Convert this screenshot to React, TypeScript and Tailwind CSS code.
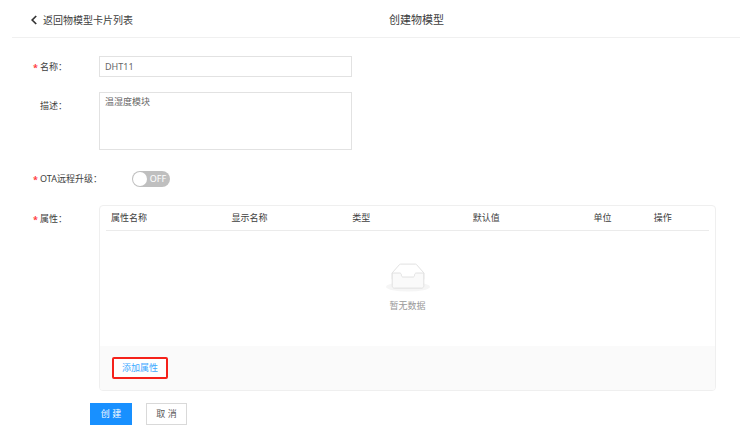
import React, { useState } from 'react';

interface FormRowProps {
  label: string;
  htmlFor?: string;
  required?: boolean;
  top?: boolean;
  className?: string;
  children: React.ReactNode;
}

const columns = [
  { title: '属性名称', width: 'w-1/5' },
  { title: '显示名称', width: 'w-1/5' },
  { title: '类型', width: 'w-1/5' },
  { title: '默认值', width: 'w-1/5' },
  { title: '单位', width: 'w-1/10' },
  { title: '操作', width: 'w-1/10' },
];

const FormRow: React.FC<FormRowProps> = ({ label, htmlFor, required, top, className = '', children }) => (
  <div className={`flex ${top ? 'items-start' : 'items-center'} ${className}`}>
    <label
      htmlFor={htmlFor}
      className={`flex w-[66px] shrink-0 items-center whitespace-nowrap leading-3 text-[#404040] ${top ? 'pt-2' : ''}`}
    >
      <span className="w-[7px] shrink-0 pt-0.5 font-bold leading-2 text-[#ff3b3f]">{required ? '*' : ''}</span>
      {label}：
    </label>
    {children}
  </div>
);

const EmptyIcon = () => (
  <svg width="44" height="29" viewBox="0 0 64 41" aria-hidden="true">
    <g transform="translate(0 1)" fill="none" fillRule="evenodd">
      <ellipse fill="#f5f5f5" cx="32" cy="33" rx="32" ry="7" />
      <g fillRule="nonzero" stroke="#e0e0e0" strokeWidth="1.4">
        <path d="M55 12.76L44.854 1.258C44.367.474 43.656 0 42.907 0H21.093c-.749 0-1.46.474-1.947 1.257L9 12.761V22h46v-9.24z" fill="#fff" />
        <path
          d="M41.613 15.931c0-1.605.994-2.93 2.227-2.931H55v18.137C55 33.26 53.68 35 52.05 35h-40.1C10.32 35 9 33.259 9 31.137V13h11.16c1.233 0 2.227 1.323 2.227 2.928v.022c0 1.605 1.005 2.901 2.237 2.901h14.752c1.232 0 2.237-1.308 2.237-2.913v-.007z"
          fill="#fafafa"
        />
      </g>
    </g>
  </svg>
);

const App: React.FC = () => {
  const [name, setName] = useState('DHT11');
  const [description, setDescription] = useState('温湿度模块');
  const [ota, setOta] = useState(false);

  return (
    <div className="bg-white pb-3 pl-3 font-['Noto_Sans','Noto_Sans_CJK_SC',sans-serif] text-[9px] text-[#404040]">
      <header className="flex h-[38px] items-center border-b border-[#f0f0f0] pl-[18px] pr-10 pt-0.5">
        <a href="#" className="flex items-center gap-1.5 text-[10px] leading-4 text-[#404040]">
          <svg width="7" height="10" viewBox="0 0 7 10" fill="none" stroke="#333" strokeWidth="1.7" aria-hidden="true">
            <path d="M6.2 1L2.2 5L6.2 9" />
          </svg>
          返回物模型卡片列表
        </a>
        <h1 className="flex-1 text-center text-[11px] leading-4 text-[#404040]">创建物模型</h1>
      </header>

      <form className="pl-[21px] pr-6 pt-[18px]" onSubmit={(e) => e.preventDefault()}>
        <FormRow label="名称" htmlFor="name" required>
          <input
            id="name"
            value={name}
            onChange={(e) => setName(e.target.value)}
            className="h-[21px] w-full max-w-[253px] border border-[#e2e2e2] px-[5px] text-[#666] outline-none"
          />
        </FormRow>

        <FormRow label="描述" htmlFor="description" top className="mt-[15px]">
          <textarea
            id="description"
            value={description}
            onChange={(e) => setDescription(e.target.value)}
            className="h-[58px] w-full max-w-[253px] resize-none border border-[#e2e2e2] px-[5px] py-[3px] leading-3 text-[#666] outline-none"
          />
        </FormRow>

        <FormRow label="OTA远程升级" htmlFor="ota" required className="mt-[21px]">
          <label
            htmlFor="ota"
            className={`relative ml-[33px] flex h-4 w-[38px] cursor-pointer items-center rounded-full px-px leading-4 text-white ${
              ota ? 'flex-row-reverse bg-[#1890ff]' : 'bg-[#bfbfbf]'
            }`}
          >
            <input
              id="ota"
              type="checkbox"
              role="switch"
              checked={ota}
              onChange={(e) => setOta(e.target.checked)}
              className="sr-only"
            />
            <span className="size-[14px] rounded-full bg-white" />
            <span className="flex-1 text-center">{ota ? 'ON' : 'OFF'}</span>
          </label>
        </FormRow>

        <FormRow label="属性" required top className="mt-[18px]">
          <div className="min-w-0 flex-1 overflow-hidden rounded-sm border border-[#efefef]">
            <div className="px-1.5">
              <table className="w-full table-fixed">
                <thead>
                  <tr className="h-6 border-b border-[#ebebeb]">
                    {columns.map((col) => (
                      <th key={col.title} className={`${col.width} px-[5px] text-left font-normal leading-3`}>
                        {col.title}
                      </th>
                    ))}
                  </tr>
                </thead>
                <tbody>
                  <tr>
                    <td colSpan={6} className="h-[116px] pb-0.5">
                      <div className="flex flex-col items-center gap-2 leading-3 text-[#999]">
                        <EmptyIcon />
                        暂无数据
                      </div>
                    </td>
                  </tr>
                </tbody>
              </table>
            </div>
            <div className="bg-[#fafafa] px-3 py-[11px]">
              <button
                type="button"
                className="h-[22px] w-14 rounded-xs border-2 border-[#f5221b] bg-white text-[#40a9ff]"
              >
                添加属性
              </button>
            </div>
          </div>
        </FormRow>

        <div className="mt-3 flex gap-[14px] pl-[57px]">
          <button type="submit" className="h-[22px] w-[42px] bg-[#1890ff] text-white">
            创 建
          </button>
          <button type="button" className="h-[22px] w-[41px] border border-[#d9d9d9] bg-white text-[#595959]">
            取 消
          </button>
        </div>
      </form>
    </div>
  );
};

export default App;
